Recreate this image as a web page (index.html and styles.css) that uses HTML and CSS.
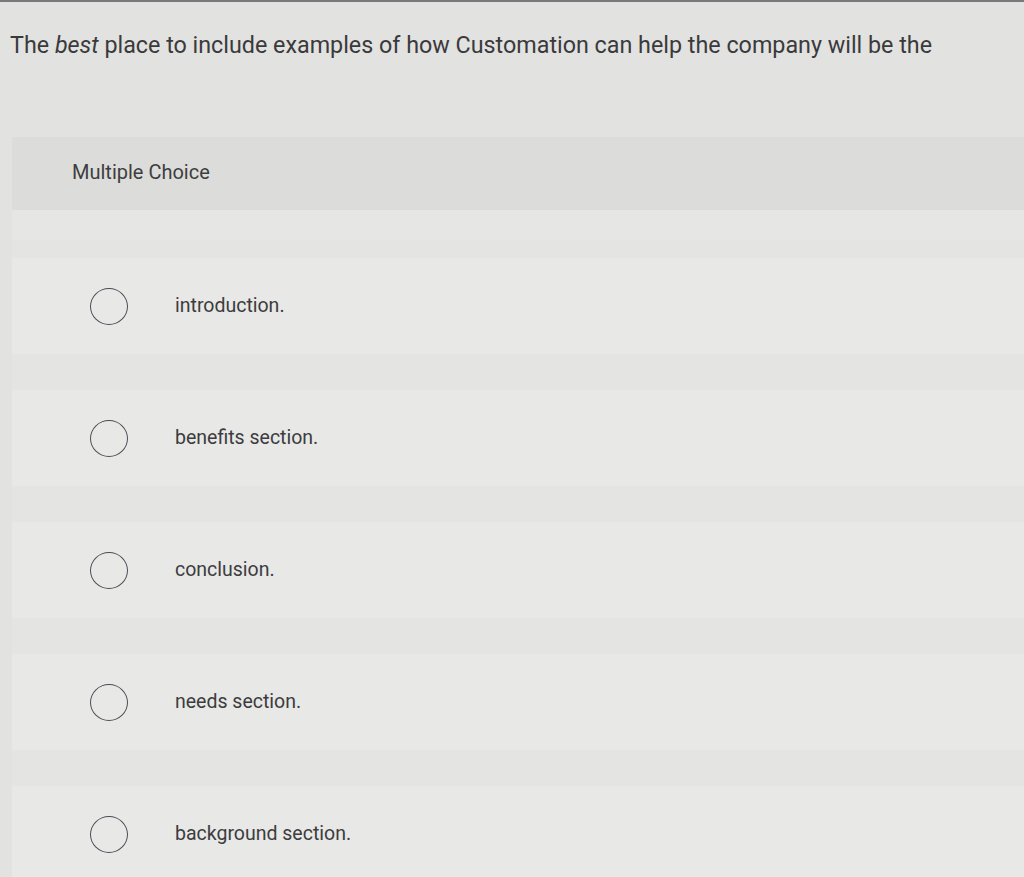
FILE: index.html
```html
<!DOCTYPE html>
<html lang="en">
<head>
<meta charset="utf-8">
<title>Multiple Choice</title>
<link rel="stylesheet" href="styles.css">
</head>
<body>
<div class="topline"></div>
<p class="question">The <em>best</em> place to include examples of how Customation can help the company will be the</p>
<section class="panel">
  <div class="panel-head">Multiple Choice</div>
  <div class="options">
    <label class="option"><span class="radio"></span><span class="opt-text">introduction.</span></label>
    <label class="option"><span class="radio"></span><span class="opt-text">benefits section.</span></label>
    <label class="option"><span class="radio"></span><span class="opt-text">conclusion.</span></label>
    <label class="option"><span class="radio"></span><span class="opt-text">needs section.</span></label>
    <label class="option"><span class="radio"></span><span class="opt-text">background section.</span></label>
  </div>
</section>
</body>
</html>
```
FILE: styles.css
```css
html, body {
  margin: 0;
  padding: 0;
}
body {
  background: #e2e2e0;
  font-family: "Roboto", "Liberation Sans", sans-serif;
  color: #3a3a3c;
  height: 877px;
  overflow: hidden;
}
.topline {
  height: 2px;
  background: #7a7a7c;
}
.question {
  margin: 0;
  padding: 28px 0 0 10px;
  height: 135px;
  box-sizing: border-box;
  font-size: 23.3px;
  line-height: 30px;
}
.question em {
  font-style: italic;
}
.panel {
  margin-left: 12px;
  background: #e6e6e4;
}
.panel-head {
  height: 73px;
  box-sizing: border-box;
  padding: 22px 0 0 60px;
  background: #dcdcda;
  font-size: 20px;
  line-height: 26px;
  color: #3e3e40;
}
.options {
  display: flex;
  flex-direction: column;
  padding-top: 30px;
}
.option {
  height: 132px;
  display: flex;
  align-items: center;
  padding-left: 78px;
  background: linear-gradient(to bottom, #e4e4e2 0, #e4e4e2 18px, #e8e8e6 18px, #e8e8e6 114px, #e4e4e2 114px);
}
.radio {
  width: 38px;
  height: 37px;
  border: 1.5px solid #4d4d57;
  border-radius: 50%;
  box-sizing: border-box;
  flex: none;
}
.opt-text {
  margin-left: 47px;
  font-size: 19.5px;
  line-height: 26px;
  color: #3c3c3e;
}
```
